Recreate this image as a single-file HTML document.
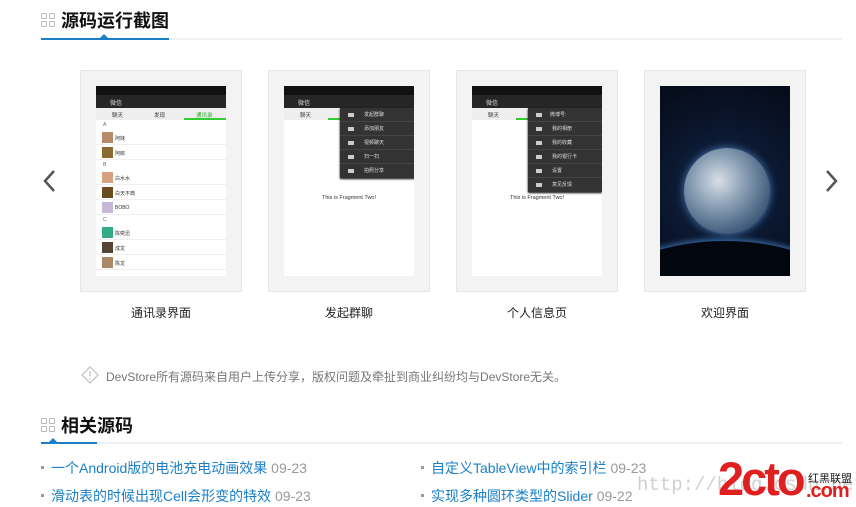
<!DOCTYPE html>
<html><head><meta charset="utf-8"><style>
*{margin:0;padding:0;box-sizing:border-box}
body{width:856px;height:507px;background:#fff;font-family:"Liberation Sans","Noto Sans CJK SC",sans-serif;position:relative;overflow:hidden;color:#333}
.abs{position:absolute}
.h{position:absolute;left:41px;font-size:18px;font-weight:bold;color:#111;font-family:"Noto Sans CJK SC",sans-serif}
.ic{position:absolute;width:14px;height:14px}
.ic i{position:absolute;width:6px;height:6px;border:1.5px solid #bbb;border-radius:1px}
.line{position:absolute;left:41px;right:14px;height:2px;background:#eef2f5}
.bl{position:absolute;left:41px;height:2px;background:#1a7fc8}
.tri{position:absolute;width:0;height:0;border-left:4px solid transparent;border-right:4px solid transparent;border-bottom:4px solid #1a7fc8}
.card{position:absolute;top:70px;width:162px;height:222px;background:#f3f3f3;border:1px solid #e6e6e6}
.scr{position:absolute;left:15px;top:15px;width:130px;height:190px;background:#fff;overflow:hidden;font-size:5px;color:#333}
.sb{height:9px;background:#111}
.ab{height:13px;background:#262626;color:#ddd;font-size:6px;padding:3px 0 0 14px;position:relative}
.tabs{height:12px;background:#eee;position:relative;font-size:5.5px}
.tabs span{position:absolute;top:3px}
.menu{position:absolute;top:22px;background:#333;color:#ddd;font-size:5px;box-shadow:0 1px 2px #000}
.menu div{height:14px;line-height:14px;border-bottom:1px solid #444;padding-left:24px;position:relative}
.menu div:before{content:"";position:absolute;left:8px;top:5px;width:6px;height:4px;background:#ccc}
.lbl{position:absolute;top:304px;width:162px;text-align:center;font-size:12px;color:#222}
.row{height:15px;position:relative;border-bottom:1px solid #f0f0f0}
.row b{position:absolute;left:6px;top:2px;width:11px;height:11px;background:#b98a6a}
.row span{position:absolute;left:19px;top:5px;font-weight:normal}
.link{position:absolute;font-size:14px;color:#1a7fc8}
.link:before{content:"";position:absolute;left:-10px;top:8px;width:3px;height:3px;background:#99a}
.link em{font-style:normal;color:#999}
</style></head><body>
<div class="ic" style="left:41px;top:13px"><i style="left:0;top:0"></i><i style="left:8px;top:0"></i><i style="left:0;top:8px"></i><i style="left:8px;top:8px"></i></div>
<div class="h" style="left:61px;top:7px">源码运行截图</div>
<div class="line" style="top:38px"></div><div class="bl" style="top:38px;width:128px"></div><div class="tri" style="left:100px;top:34px"></div>

<svg class="abs" style="left:40px;top:168px" width="18" height="26"><path d="M14 3 L5 13 L14 23" stroke="#555" stroke-width="2.5" fill="none"/></svg>
<svg class="abs" style="left:823px;top:168px" width="18" height="26"><path d="M4 3 L13 13 L4 23" stroke="#555" stroke-width="2.5" fill="none"/></svg>

<div class="card" style="left:80px"><div class="scr">
<div class="sb"></div><div class="ab">微信</div>
<div class="tabs"><span style="left:16px">聊天</span><span style="left:58px">发现</span><span style="left:100px;color:#3a3">通讯录</span><div class="abs" style="left:88px;right:0;bottom:0;height:2px;background:#3c3"></div></div>
<div style="font-size:5px;padding:2px 7px;color:#666">A</div>
<div class="row"><b></b><span>阿妹</span></div><div class="row"><b style="background:#8a6a30"></b><span>阿郎</span></div>
<div style="font-size:5px;padding:2px 7px;color:#666">B</div>
<div class="row"><b style="background:#d9a080"></b><span>白水水</span></div><div class="row"><b style="background:#6a4a20"></b><span>白天不典</span></div><div class="row"><b style="background:#c8b8d8"></b><span>BOBO</span></div>
<div style="font-size:5px;padding:2px 7px;color:#666">C</div>
<div class="row"><b style="background:#3a8"></b><span>陈奕迅</span></div><div class="row"><b style="background:#543"></b><span>成龙</span></div><div class="row"><b style="background:#a86"></b><span>陈龙</span></div>
</div></div>

<div class="card" style="left:268px"><div class="scr">
<div class="sb"></div><div class="ab">微信</div>
<div class="tabs"><span style="left:16px">聊天</span><div class="abs" style="left:44px;width:14px;bottom:0;height:2px;background:#3c3"></div></div>
<div class="menu" style="left:56px;width:79px"><div>发起群聊</div><div>添加朋友</div><div>视频聊天</div><div>扫一扫</div><div style="border:0">拍照分享</div></div>
<div class="abs" style="top:109px;width:130px;text-align:center;font-size:5.5px">This is Fragment Two!</div>
</div></div>

<div class="card" style="left:456px"><div class="scr">
<div class="sb"></div><div class="ab">微信</div>
<div class="tabs"><span style="left:16px">聊天</span><div class="abs" style="left:44px;width:14px;bottom:0;height:2px;background:#3c3"></div></div>
<div class="menu" style="left:56px;width:74px"><div style="padding-left:22px">微博号:</div><div>我的相册</div><div>我的收藏</div><div>我的银行卡</div><div>设置</div><div style="border:0">意见反馈</div></div>
<div class="abs" style="top:109px;width:130px;text-align:center;font-size:5.5px">This is Fragment Two!</div>
</div></div>

<div class="card" style="left:644px"><div class="scr" style="background:radial-gradient(circle at 50% 55%,#1a3560 0,#0b1830 45%,#050b18 100%)">
<div class="abs" style="left:24px;top:62px;width:86px;height:86px;border-radius:50%;background:radial-gradient(circle at 40% 38%,#d8e0e8 0,#8a9fb5 35%,#45607f 70%,#1a2d4a 100%);box-shadow:0 0 8px #4a78b0"></div>
<div class="abs" style="left:-60px;top:155px;width:250px;height:120px;border-radius:50%;background:#02060e;box-shadow:0 -2px 6px #3a6aa0"></div>
</div></div>

<div class="lbl" style="left:80px">通讯录界面</div>
<div class="lbl" style="left:268px">发起群聊</div>
<div class="lbl" style="left:456px">个人信息页</div>
<div class="lbl" style="left:644px">欢迎界面</div>

<svg class="abs" style="left:81px;top:366px" width="18" height="18"><path d="M9 1 L17 9 L9 17 L1 9Z" stroke="#ccc" stroke-width="1.5" fill="none"/><path d="M9 5 V10.5 M9 12 V13.5" stroke="#ccc" stroke-width="1.6"/></svg>
<div class="abs" style="left:106px;top:368px;font-size:12px;color:#777">DevStore所有源码来自用户上传分享，版权问题及牵扯到商业纠纷均与DevStore无关。</div>

<div class="ic" style="left:41px;top:418px"><i style="left:0;top:0"></i><i style="left:8px;top:0"></i><i style="left:0;top:8px"></i><i style="left:8px;top:8px"></i></div>
<div class="h" style="left:61px;top:412px">相关源码</div>
<div class="line" style="top:442px"></div><div class="bl" style="top:442px;width:56px"></div><div class="tri" style="left:49px;top:438px"></div>

<div class="link" style="left:51px;top:458px">一个Android版的电池充电动画效果 <em>09-23</em></div>
<div class="link" style="left:51px;top:486px">滑动表的时候出现Cell会形变的特效 <em>09-23</em></div>
<div class="link" style="left:431px;top:458px">自定义TableView中的索引栏 <em>09-23</em></div>
<div class="link" style="left:431px;top:486px">实现多种圆环类型的Slider <em>09-22</em></div>

<div class="abs" style="left:637px;top:474px;font-family:'Liberation Mono',monospace;font-size:19px;color:rgba(150,150,150,.45)">http://blog.csdn.net/le</div>
<div class="abs" style="left:718px;top:455px;font-size:47px;font-weight:bold;color:#e02020;letter-spacing:-3px;font-family:'Liberation Sans',sans-serif;line-height:47px">2cto</div>
<div class="abs" style="left:808px;top:470px;font-size:11px;color:#222">红黑联盟</div>
<div class="abs" style="left:806px;top:480px;font-size:20px;font-weight:bold;color:#e02020;letter-spacing:-1px">.com</div>
</body></html>
